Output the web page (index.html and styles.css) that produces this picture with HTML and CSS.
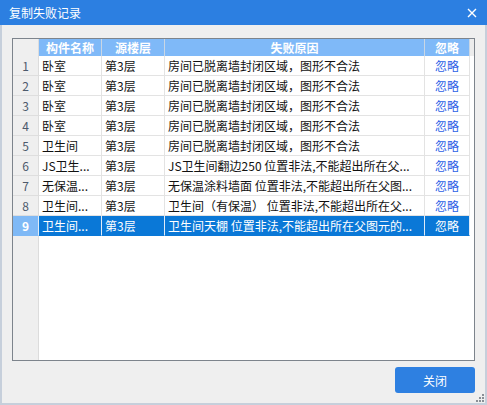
FILE: index.html
```html
<!DOCTYPE html>
<html lang="zh">
<head>
<meta charset="utf-8">
<title>复制失败记录</title>
<link rel="stylesheet" href="styles.css">
</head>
<body>
<div class="window">
  <div class="titlebar">
    <span class="title">复制失败记录</span>
    <span class="close">
      <svg width="10" height="10" viewBox="0 0 10 10"><path d="M1 1 L9 9 M9 1 L1 9" stroke="#fff" stroke-width="1.4" fill="none"/></svg>
    </span>
  </div>
  <div class="body">
    <div class="table">
      <div class="grid">
        <div class="hc num"></div>
        <div class="hc">构件名称</div>
        <div class="hc">源楼层</div>
        <div class="hc">失败原因</div>
        <div class="hc">忽略</div>
        <div class="hc extra"></div>

        <div class="c num">1</div><div class="c">卧室</div><div class="c">第3层</div><div class="c">房间已脱离墙封闭区域，图形不合法</div><div class="c link">忽略</div><div class="c extra"></div>
        <div class="c num">2</div><div class="c">卧室</div><div class="c">第3层</div><div class="c">房间已脱离墙封闭区域，图形不合法</div><div class="c link">忽略</div><div class="c extra"></div>
        <div class="c num">3</div><div class="c">卧室</div><div class="c">第3层</div><div class="c">房间已脱离墙封闭区域，图形不合法</div><div class="c link">忽略</div><div class="c extra"></div>
        <div class="c num">4</div><div class="c">卧室</div><div class="c">第3层</div><div class="c">房间已脱离墙封闭区域，图形不合法</div><div class="c link">忽略</div><div class="c extra"></div>
        <div class="c num">5</div><div class="c">卫生间</div><div class="c">第3层</div><div class="c">房间已脱离墙封闭区域，图形不合法</div><div class="c link">忽略</div><div class="c extra"></div>
        <div class="c num">6</div><div class="c">JS卫生...</div><div class="c">第3层</div><div class="c">JS卫生间翻边250 位置非法,不能超出所在父...</div><div class="c link">忽略</div><div class="c extra"></div>
        <div class="c num">7</div><div class="c">无保温...</div><div class="c">第3层</div><div class="c">无保温涂料墙面 位置非法,不能超出所在父图...</div><div class="c link">忽略</div><div class="c extra"></div>
        <div class="c num">8</div><div class="c">卫生间...</div><div class="c">第3层</div><div class="c">卫生间（有保温） 位置非法,不能超出所在父...</div><div class="c link">忽略</div><div class="c extra"></div>
        <div class="c num sel">9</div><div class="c sel">卫生间...</div><div class="c sel">第3层</div><div class="c sel">卫生间天棚 位置非法,不能超出所在父图元的...</div><div class="c link sel">忽略</div><div class="c extra"></div>

        <div class="fill num"></div>
        <div class="fill rest"></div>
      </div>
    </div>
    <div class="footer">
      <button class="btn">关闭</button>
    </div>
  </div>
  <div class="grip">
    <svg width="8" height="8" viewBox="0 0 8 8">
      <rect x="6" y="0" width="2" height="2" fill="#8a8f96"/>
      <rect x="3" y="3" width="2" height="2" fill="#8a8f96"/>
      <rect x="6" y="3" width="2" height="2" fill="#8a8f96"/>
      <rect x="0" y="6" width="2" height="2" fill="#8a8f96"/>
      <rect x="3" y="6" width="2" height="2" fill="#8a8f96"/>
      <rect x="6" y="6" width="2" height="2" fill="#8a8f96"/>
    </svg>
  </div>
</div>
</body>
</html>
```

FILE: styles.css
```css
* { box-sizing: border-box; }
html, body { margin: 0; padding: 0; }
body {
  font-family: "Noto Sans CJK SC", "Noto Sans", sans-serif;
  font-size: 12px;
  background: #efefef;
}
.window {
  position: relative;
  width: 487px;
  height: 405px;
  display: flex;
  flex-direction: column;
  background: #efefef;
}
.titlebar {
  height: 25px;
  flex: none;
  background: #2c7fe1;
  color: #fff;
  display: flex;
  align-items: center;
  justify-content: space-between;
  padding: 0 10px 0 9px;
}
.title { font-size: 12px; line-height: 25px; }
.close { display: flex; align-items: center; }
.body {
  flex: 1;
  display: flex;
  flex-direction: column;
  gap: 6px;
  padding: 13px 10px 10px 10px;
  border: 2px solid #c6cfdb;
  border-top: none;
}
.table {
  flex: 1;
  border: 1px solid #7d848c;
  background: #fff;
  overflow: hidden;
}
.grid {
  display: grid;
  height: 100%;
  grid-template-columns: 26px 63px 63px 260px 45px 1fr;
  grid-template-rows: 17px repeat(9, 20px) 1fr;
}
.hc {
  background: #7fb9f8;
  color: #fff;
  font-weight: bold;
  text-align: center;
  line-height: 17px;
  border-right: 1px solid #c9d6e4;
  white-space: nowrap;
}
.hc.num { background: #efefef; border-right: 1px solid #dcdcdc; }
.hc.extra { background: #ececec; border-right: none; }
.c {
  line-height: 19px;
  padding: 0 3px;
  border-right: 1px solid #e3e3e3;
  border-bottom: 1px solid #e3e3e3;
  white-space: nowrap;
  overflow: hidden;
  color: #111;
}
.c.num {
  background: #efefef;
  color: #4d5a6c;
  text-align: center;
  border-right: 1px solid #dcdcdc;
  border-bottom: 1px solid #dedede;
  padding: 0;
}
.c.link { color: #2c5fe6; text-align: center; padding: 0; }
.c.extra { border-right: none; border-bottom: none; padding: 0; }
.c.sel {
  background: #0a78d7;
  color: #fff;
  border-right-color: #e0ebf7;
  border-bottom-color: #0a78d7;
}
.c.num.sel {
  background: #7fb9f6;
  color: #fff;
  font-weight: bold;
  border-bottom-color: #7fb9f6;
}
.fill.num { background: #efefef; border-right: 1px solid #dcdcdc; }
.fill.rest { grid-column: 2 / -1; background: #fff; }
.footer {
  display: flex;
  justify-content: flex-end;
  flex: none;
}
.btn {
  width: 80px;
  height: 26px;
  border: none;
  border-radius: 3px;
  background: #2e80e1;
  color: #fff;
  font-family: "Noto Sans CJK SC", "Noto Sans", sans-serif;
  font-size: 12px;
  padding: 0;
}
.grip {
  position: absolute;
  right: 3px;
  bottom: 3px;
  width: 8px;
  height: 8px;
  display: flex;
}
```
